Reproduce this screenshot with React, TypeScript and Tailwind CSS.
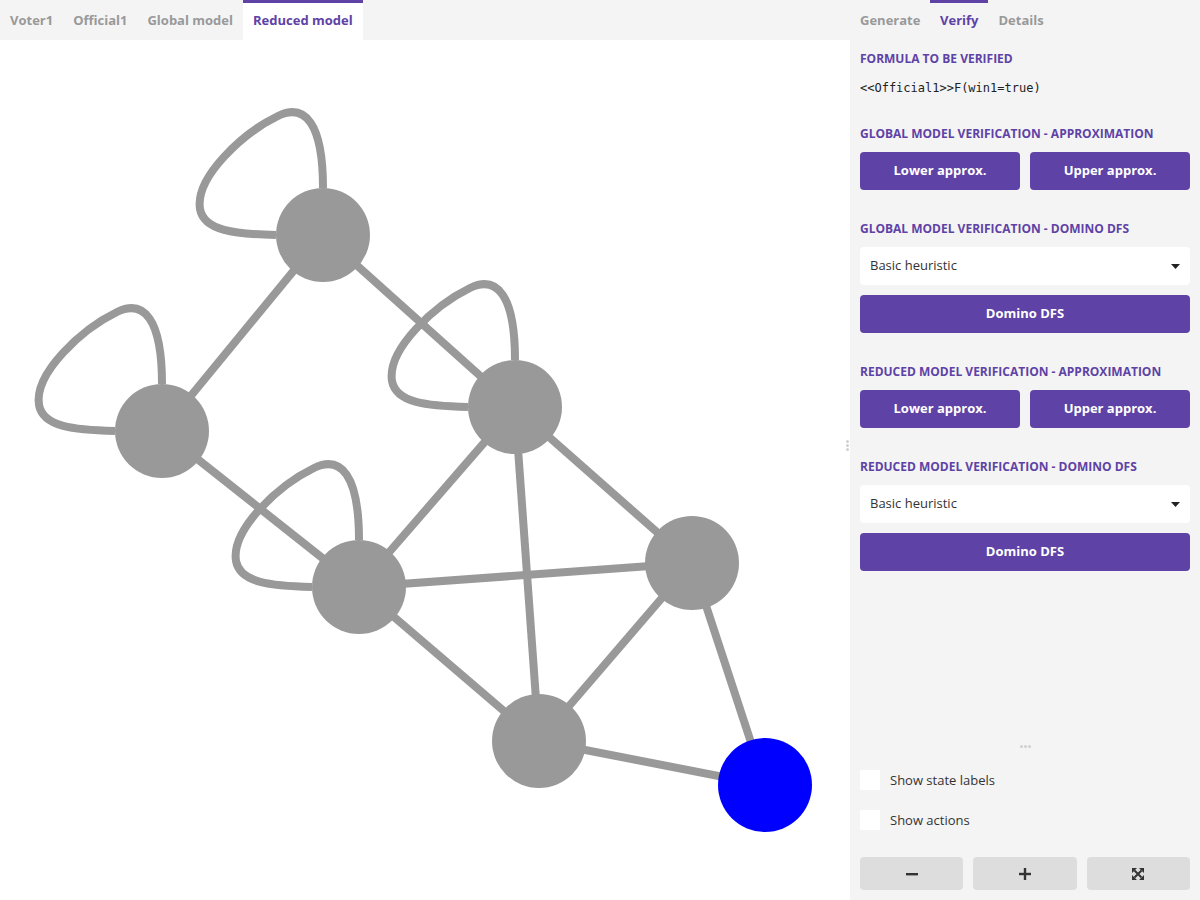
import React from "react";

const nodes: Record<string, [number, number]> = {
  a: [323, 235],
  b: [162, 431],
  c: [515, 407],
  d: [359, 587],
  e: [692, 563],
  f: [539, 741],
  g: [765, 785],
};

const edges: [string, string][] = [
  ["a", "b"],
  ["a", "c"],
  ["b", "d"],
  ["c", "d"],
  ["c", "e"],
  ["c", "f"],
  ["d", "e"],
  ["d", "f"],
  ["e", "f"],
  ["e", "g"],
  ["f", "g"],
];

const loops = ["a", "b", "c", "d"];

function loopPath(cx: number, cy: number) {
  return `M ${cx} ${cy - 47} C ${cx} ${cy - 112}, ${cx - 18} ${cy - 132}, ${cx - 45} ${cy - 119} C ${cx - 80} ${cy - 102}, ${cx - 128} ${cy - 58}, ${cx - 123} ${cy - 26} C ${cx - 119} ${cy - 4}, ${cx - 88} ${cy - 1}, ${cx - 47} ${cy}`;
}

function Graph() {
  return (
    <svg width="850" height="860" viewBox="0 40 850 860" className="block">
      {edges.map(([s, t]) => (
        <line
          key={s + t}
          x1={nodes[s][0]}
          y1={nodes[s][1]}
          x2={nodes[t][0]}
          y2={nodes[t][1]}
          stroke="#999999"
          strokeWidth="8"
        />
      ))}
      {loops.map((k) => (
        <path key={k} d={loopPath(nodes[k][0], nodes[k][1])} fill="none" stroke="#999999" strokeWidth="8" />
      ))}
      {Object.entries(nodes).map(([k, [x, y]]) => (
        <circle key={k} cx={x} cy={y} r="47" fill={k === "g" ? "#0000ff" : "#999999"} />
      ))}
    </svg>
  );
}

function SectionTitle({ children }: { children: React.ReactNode }) {
  return <div className="text-[12px] leading-4 font-bold text-[#5e42a6] mb-[10px]">{children}</div>;
}

function PurpleButton({ children }: { children: React.ReactNode }) {
  return (
    <button className="flex-1 h-[38px] rounded-[4px] bg-[#5e42a6] text-white text-[13px] font-bold">{children}</button>
  );
}

function Select() {
  return (
    <div className="h-[38px] rounded-[4px] bg-white flex items-center justify-between pl-[10px] pr-[10px] text-[13px] text-[#333]">
      <span>Basic heuristic</span>
      <svg width="9" height="5" viewBox="0 0 9 5">
        <path d="M0 0 L9 0 L4.5 5 Z" fill="#222" />
      </svg>
    </div>
  );
}

function ExpandIcon() {
  return (
    <svg width="12" height="12" viewBox="0 0 12 12">
      <path d="M2.5 2.5 L9.5 9.5 M9.5 2.5 L2.5 9.5" stroke="#333" strokeWidth="2" />
      <path d="M0 0 H5 L0 5 Z M12 0 V5 L7 0 Z M0 12 V7 L5 12 Z M12 12 H7 L12 7 Z" fill="#333" />
    </svg>
  );
}

export default function App() {
  return (
    <div className="flex w-[1200px] h-[900px] bg-[#f4f4f4] font-['Open_Sans',sans-serif]">
      {/* Left: model tabs + graph */}
      <div className="w-[850px] flex flex-col">
        <div className="h-10 flex text-[13px] font-bold text-[#999]">
          <div className="px-[10px] pt-[2px] flex items-center">Voter1</div>
          <div className="px-[10px] pt-[2px] flex items-center">Official1</div>
          <div className="px-[10px] pt-[2px] flex items-center">Global model</div>
          <div className="px-[10px] flex items-center bg-white border-t-[3px] border-[#5e42a6] text-[#5e42a6] pb-[1px] w-[120px]">
            Reduced model
          </div>
        </div>
        <div className="relative flex-1 bg-white overflow-hidden">
          <Graph />
          <div className="absolute right-[1px] top-[400px] flex flex-col gap-[1px]">
            <span className="w-[3px] h-[3px] rounded-full bg-[#d0d0d0]" />
            <span className="w-[3px] h-[3px] rounded-full bg-[#d0d0d0]" />
            <span className="w-[3px] h-[3px] rounded-full bg-[#d0d0d0]" />
          </div>
        </div>
      </div>

      {/* Right: verification panel */}
      <div className="w-[350px] flex flex-col">
        <div className="h-10 flex text-[13px] font-bold text-[#999]">
          <div className="px-[10px] pt-[2px] flex items-center w-[80px]">Generate</div>
          <div className="px-[10px] flex items-center border-t-[3px] border-[#5e42a6] text-[#5e42a6] pb-[1px]">Verify</div>
          <div className="px-[10px] pt-[2px] flex items-center">Details</div>
        </div>

        <div className="px-[10px] pt-[11px] flex flex-col">
          <div className="text-[12px] leading-4 font-bold text-[#5e42a6]">FORMULA TO BE VERIFIED</div>
          <div className="font-['DejaVu_Sans_Mono',monospace] text-[12px] leading-[16px] text-[#222] mt-[13px]">
            &lt;&lt;Official1&gt;&gt;F(win1=true)
          </div>

          <div className="mt-[30px]">
            <SectionTitle>GLOBAL MODEL VERIFICATION - APPROXIMATION</SectionTitle>
            <div className="flex gap-[10px]">
              <PurpleButton>Lower approx.</PurpleButton>
              <PurpleButton>Upper approx.</PurpleButton>
            </div>
          </div>

          <div className="mt-[31px]">
            <SectionTitle>GLOBAL MODEL VERIFICATION - DOMINO DFS</SectionTitle>
            <Select />
            <div className="flex mt-[10px]">
              <PurpleButton>Domino DFS</PurpleButton>
            </div>
          </div>

          <div className="mt-[31px]">
            <SectionTitle>REDUCED MODEL VERIFICATION - APPROXIMATION</SectionTitle>
            <div className="flex gap-[10px]">
              <PurpleButton>Lower approx.</PurpleButton>
              <PurpleButton>Upper approx.</PurpleButton>
            </div>
          </div>

          <div className="mt-[31px]">
            <SectionTitle>REDUCED MODEL VERIFICATION - DOMINO DFS</SectionTitle>
            <Select />
            <div className="flex mt-[10px]">
              <PurpleButton>Domino DFS</PurpleButton>
            </div>
          </div>
        </div>

        <div className="flex-1" />

        <div className="px-[10px] pb-[10px] flex flex-col">
          <div className="flex justify-center gap-[1px] mb-[22px]">
            <span className="w-[3px] h-[3px] rounded-full bg-[#d0d0d0]" />
            <span className="w-[3px] h-[3px] rounded-full bg-[#d0d0d0]" />
            <span className="w-[3px] h-[3px] rounded-full bg-[#d0d0d0]" />
          </div>
          <label className="flex items-center gap-[10px] text-[13px] text-[#333] h-5">
            <span className="w-5 h-5 bg-white" />
            <span className="pt-[2px]">Show state labels</span>
          </label>
          <label className="flex items-center gap-[10px] text-[13px] text-[#333] h-5 mt-5">
            <span className="w-5 h-5 bg-white" />
            <span className="pt-[2px]">Show actions</span>
          </label>
          <div className="flex gap-[10px] mt-[27px]">
            <button className="flex-1 h-[33px] rounded-[4px] bg-[#dddddd] flex items-center justify-center">
              <svg width="12" height="12" viewBox="0 0 12 12">
                <rect x="0" y="5" width="12" height="2.4" fill="#333" />
              </svg>
            </button>
            <button className="flex-1 h-[33px] rounded-[4px] bg-[#dddddd] flex items-center justify-center">
              <svg width="12" height="12" viewBox="0 0 12 12">
                <rect x="0" y="4.8" width="12" height="2.4" fill="#333" />
                <rect x="4.8" y="0" width="2.4" height="12" fill="#333" />
              </svg>
            </button>
            <button className="flex-1 h-[33px] rounded-[4px] bg-[#dddddd] flex items-center justify-center">
              <ExpandIcon />
            </button>
          </div>
        </div>
      </div>
    </div>
  );
}
